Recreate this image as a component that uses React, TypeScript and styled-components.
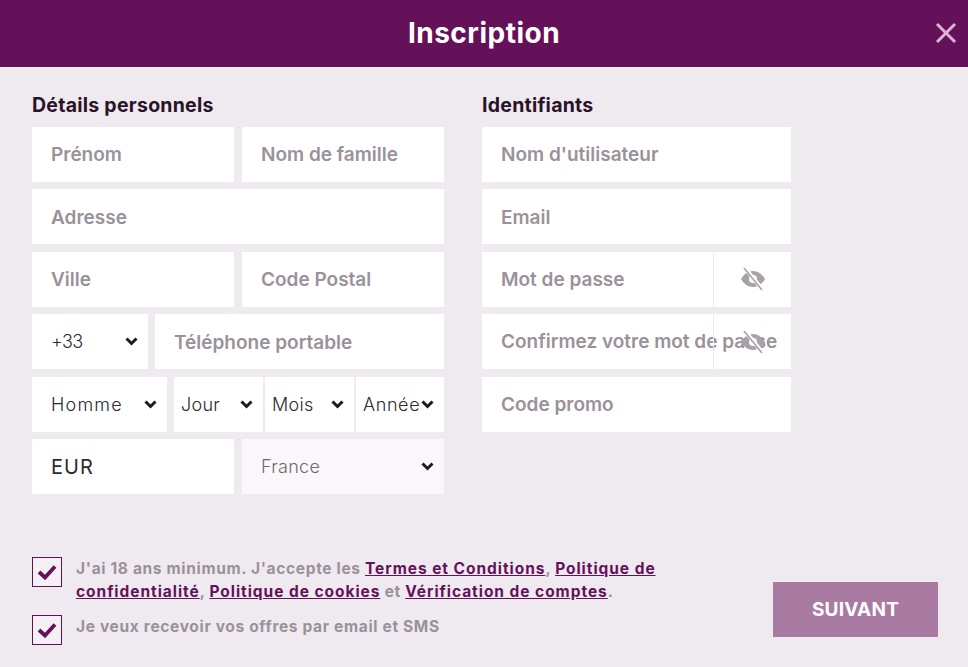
import React from "react";
import styled, { createGlobalStyle } from "styled-components";

const GlobalStyle = createGlobalStyle`
  html, body {
    margin: 0;
    padding: 0;
    background: #efeaef;
    font-family: Inter, "Open Sans", sans-serif;
  }
  * {
    box-sizing: border-box;
  }
`;

const Page = styled.div`
  width: 968px;
  height: 667px;
  overflow: hidden;
  background: #efeaef;
`;

const Header = styled.header`
  position: relative;
  height: 67px;
  display: flex;
  align-items: center;
  justify-content: center;
  padding-bottom: 2px;
  background: #65115a;
`;

const Title = styled.h1`
  margin: 0;
  color: #fff;
  font-size: 28px;
  font-weight: 700;
  letter-spacing: 0.5px;
`;

const Close = styled.button`
  position: absolute;
  top: 22px;
  right: 11px;
  width: 22px;
  height: 22px;
  padding: 0;
  border: 0;
  background: none;
  color: #dcb5d6;
`;

const Columns = styled.div`
  display: flex;
  gap: 38px;
  padding: 27px 0 0 32px;
`;

const Column = styled.section<{ $width: number }>`
  width: ${(p) => p.$width}px;
  display: flex;
  flex-direction: column;
  gap: 7.5px;
`;

const Heading = styled.h2`
  margin: 0 0 2px;
  height: 23px;
  line-height: 23px;
  color: #2a1328;
  font-size: 19.5px;
  font-weight: 700;
  letter-spacing: 0.25px;
`;

const Row = styled.div<{ $gap?: number }>`
  display: flex;
  gap: ${(p) => p.$gap ?? 8}px;
  height: 55px;
`;

const DateGroup = styled.div`
  flex: 1;
  display: flex;
  gap: 2px;
`;

const Input = styled.input`
  flex: 1 1 0;
  min-width: 0;
  height: 55px;
  padding: 0 19px;
  border: 0;
  outline: 0;
  background: #fff;
  color: #2c2a2c;
  font: 400 20px Inter, sans-serif;
  letter-spacing: 1px;
  &::placeholder {
    color: #9a919a;
    font-size: 19px;
    font-weight: 600;
    letter-spacing: 0;
    opacity: 1;
  }
`;

const PasswordField = styled.div`
  display: flex;
  height: 55px;
  background: #fff;
`;

const PasswordLabel = styled.div`
  flex: 1 1 0;
  min-width: 0;
  padding-left: 19px;
  line-height: 55px;
  color: #9a919a;
  font-size: 19px;
  font-weight: 600;
  white-space: nowrap;
`;

const EyeCell = styled.div`
  flex: none;
  width: 78px;
  height: 55px;
  display: flex;
  align-items: center;
  justify-content: center;
  border-left: 1px solid #efeaef;
  color: #a8a2a8;
`;

const SelectBox = styled.div<{
  $width?: number;
  $muted?: boolean;
  $pad?: number;
  $spacing?: number;
}>`
  flex: ${(p) => (p.$width ? `0 0 ${p.$width}px` : "1 1 0")};
  min-width: 0;
  height: 55px;
  position: relative;
  display: flex;
  align-items: center;
  padding-left: ${(p) => p.$pad ?? 19}px;
  background: ${(p) => (p.$muted ? "#faf7fa" : "#fff")};
  color: ${(p) => (p.$muted ? "#6e686e" : "#2c2a2c")};
  font-size: 18px;
  font-weight: 300;
  letter-spacing: ${(p) => p.$spacing ?? 0.3}px;

  svg {
    position: absolute;
    top: 23px;
    right: 10px;
  }
`;

const Footer = styled.div`
  display: flex;
  justify-content: space-between;
  align-items: flex-end;
  padding: 63px 30px 0 32px;
`;

const Consents = styled.div`
  width: 640px;
  display: flex;
  flex-direction: column;
  gap: 12px;
`;

const Consent = styled.label`
  display: flex;
  gap: 14px;
  align-items: flex-start;
`;

const CheckBox = styled.span`
  flex: none;
  width: 30px;
  height: 30px;
  display: flex;
  align-items: center;
  justify-content: center;
  border: 1px solid #65115a;
  background: #f4f0f4;
  color: #65115a;
`;

const ConsentText = styled.span`
  color: #9a919a;
  font-size: 15.5px;
  font-weight: 700;
  line-height: 23px;
  letter-spacing: 0.66px;
`;

const Legal = styled.a`
  color: #65115a;
  text-decoration: underline;
  letter-spacing: 0.95px;
`;

const NextButton = styled.button`
  width: 165px;
  height: 55px;
  margin-bottom: 8px;
  border: 0;
  background: #a97aa2;
  color: #fff;
  font: 700 19px Inter, sans-serif;
  letter-spacing: 0.2px;
`;

const Chevron = () => (
  <svg width="13" height="9" viewBox="0 0 13 9" fill="none">
    <path d="M1.5 1.5l5 5 5-5" stroke="#1d1a1d" strokeWidth="3" />
  </svg>
);

const Eye = () => (
  <svg width="26" height="24" viewBox="0 0 26 24" fill="none">
    <path
      d="M1 12c3-5 7-8 12-8s9 3 12 8c-3 5-7 8-12 8S4 17 1 12z"
      fill="currentColor"
    />
    <circle cx="13" cy="12" r="4" fill="#fff" />
    <path d="M5 1l17 21" stroke="#fff" strokeWidth="4" />
    <path d="M4 1l18 22" stroke="currentColor" strokeWidth="1.6" />
  </svg>
);

const Check = () => (
  <svg width="20" height="16" viewBox="0 0 20 16" fill="none">
    <path d="M2 8l6 5.5L18 2.5" stroke="currentColor" strokeWidth="3.8" />
  </svg>
);

const App = () => {
  return (
    <Page>
      <GlobalStyle />
      <Header>
        <Title>Inscription</Title>
        <Close aria-label="Fermer">
          <svg width="22" height="22" viewBox="0 0 22 22" fill="none">
            <path d="M2 2l18 18M20 2L2 20" stroke="currentColor" strokeWidth="3" />
          </svg>
        </Close>
      </Header>
      <Columns>
        <Column $width={412}>
          <Heading>Détails personnels</Heading>
          <Row>
            <Input placeholder="Prénom" />
            <Input placeholder="Nom de famille" />
          </Row>
          <Row>
            <Input placeholder="Adresse" />
          </Row>
          <Row>
            <Input placeholder="Ville" />
            <Input placeholder="Code Postal" />
          </Row>
          <Row $gap={7}>
            <SelectBox $width={116} $spacing={-0.6}>
              +33
              <Chevron />
            </SelectBox>
            <Input placeholder="Téléphone portable" />
          </Row>
          <Row $gap={7}>
            <SelectBox $width={135} $spacing={1.2}>
              Homme
              <Chevron />
            </SelectBox>
            <DateGroup>
              <SelectBox $width={89} $pad={7}>
                Jour
                <Chevron />
              </SelectBox>
              <SelectBox $width={89} $pad={7}>
                Mois
                <Chevron />
              </SelectBox>
              <SelectBox $pad={7} $spacing={0.6}>
                Année
                <Chevron />
              </SelectBox>
            </DateGroup>
          </Row>
          <Row>
            <Input defaultValue="EUR" />
            <SelectBox $muted $width={202}>
              France
              <Chevron />
            </SelectBox>
          </Row>
        </Column>
        <Column $width={309}>
          <Heading>Identifiants</Heading>
          <Row>
            <Input placeholder="Nom d'utilisateur" />
          </Row>
          <Row>
            <Input placeholder="Email" />
          </Row>
          <PasswordField>
            <PasswordLabel>Mot de passe</PasswordLabel>
            <EyeCell>
              <Eye />
            </EyeCell>
          </PasswordField>
          <PasswordField>
            <PasswordLabel>Confirmez votre mot de passe</PasswordLabel>
            <EyeCell>
              <Eye />
            </EyeCell>
          </PasswordField>
          <Row>
            <Input placeholder="Code promo" />
          </Row>
        </Column>
      </Columns>
      <Footer>
        <Consents>
          <Consent>
            <CheckBox>
              <Check />
            </CheckBox>
            <ConsentText>
              J'ai 18 ans minimum. J'accepte les <Legal>Termes et Conditions</Legal>,{" "}
              <Legal>Politique de confidentialité</Legal>, <Legal>Politique de cookies</Legal> et{" "}
              <Legal>Vérification de comptes</Legal>.
            </ConsentText>
          </Consent>
          <Consent>
            <CheckBox>
              <Check />
            </CheckBox>
            <ConsentText>Je veux recevoir vos offres par email et SMS</ConsentText>
          </Consent>
        </Consents>
        <NextButton>SUIVANT</NextButton>
      </Footer>
    </Page>
  );
};

export default App;
